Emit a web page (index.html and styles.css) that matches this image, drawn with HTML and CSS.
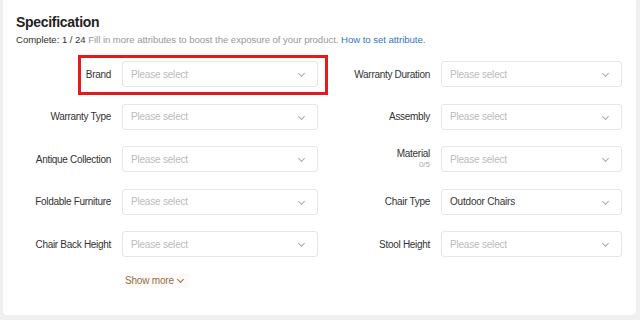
FILE: index.html
```html
<!DOCTYPE html>
<html lang="en">
<head>
    <meta charset="UTF-8">
    <meta name="viewport" content="width=device-width, initial-scale=1.0">
    <title>Specification</title>
    <link rel="stylesheet" href="styles.css">
</head>
<body>
    <div class="card">
        <h2 class="title">Specification</h2>
        <p class="subtitle">
            <span class="done">Complete: 1 / 24</span>
            Fill in more attributes to boost the exposure of your product.
            <a href="#" class="link">How to set attribute.</a>
        </p>

        <div class="spec-grid">
            <!-- highlight around the Brand field -->
            <div class="highlight"></div>

            <label class="label">Brand</label>
            <div class="select placeholder">Please select<span class="arrow"></span></div>
            <label class="label">Warranty Duration</label>
            <div class="select placeholder">Please select<span class="arrow"></span></div>

            <label class="label">Warranty Type</label>
            <div class="select placeholder">Please select<span class="arrow"></span></div>
            <label class="label">Assembly</label>
            <div class="select placeholder">Please select<span class="arrow"></span></div>

            <label class="label">Antique Collection</label>
            <div class="select placeholder">Please select<span class="arrow"></span></div>
            <label class="label">Material<span class="count">0/5</span></label>
            <div class="select placeholder">Please select<span class="arrow"></span></div>

            <label class="label">Foldable Furniture</label>
            <div class="select placeholder">Please select<span class="arrow"></span></div>
            <label class="label">Chair Type</label>
            <div class="select">Outdoor Chairs<span class="arrow"></span></div>

            <label class="label">Chair Back Height</label>
            <div class="select placeholder">Please select<span class="arrow"></span></div>
            <label class="label">Stool Height</label>
            <div class="select placeholder">Please select<span class="arrow"></span></div>
        </div>

        <div class="more-row">
            <a href="#" class="show-more">Show more <span class="more-arrow"></span></a>
        </div>
    </div>
</body>
</html>
```
FILE: styles.css
```css
body {
    font-family: 'Liberation Sans', Arial, sans-serif;
    margin: 0;
    padding: 0;
    background-color: #f0f0f0;
    color: #333;
}
.card {
    background-color: white;
    margin: 0 4px 0 3px;
    padding: 13px 14px 0 13px;
    height: 302px;
    border-radius: 0 0 4px 4px;
    box-shadow: 0 1px 2px rgba(0, 0, 0, 0.04);
}
.title {
    margin: 0;
    font-size: 14px;
    letter-spacing: -0.3px;
    font-weight: bold;
    color: #222;
    line-height: 18px;
}
.subtitle {
    margin: 2px 0 0 0;
    font-size: 9.6px;
    letter-spacing: -0.05px;
    line-height: 14px;
    color: #999;
}
.subtitle .done {
    color: #333;
}
.link {
    color: #2f78c4;
    text-decoration: none;
}
.spec-grid {
    position: relative;
    display: grid;
    grid-template-columns: 106px 196px 123px 181px;
    grid-auto-rows: 26px;
    row-gap: 16.5px;
    margin-top: 14px;
    margin-left: -13px;
    padding-left: 13px;
}
.label {
    display: flex;
    flex-direction: column;
    align-items: flex-end;
    justify-content: center;
    padding-right: 11px;
    font-size: 10px;
    letter-spacing: -0.3px;
    color: #333;
    text-align: right;
}
.count {
    margin-top: 1px;
    font-size: 8px;
    letter-spacing: 0;
    color: #aaa;
    line-height: 10px;
}
.select {
    position: relative;
    display: flex;
    align-items: center;
    padding-left: 8px;
    border: 1px solid #e6e6e6;
    border-radius: 3px;
    font-size: 10px;
    letter-spacing: -0.2px;
    color: #333;
}
.select.placeholder {
    color: #bbb;
}
.arrow {
    position: absolute;
    right: 13px;
    top: 9px;
    width: 4px;
    height: 4px;
    border-right: 1px solid #aaa;
    border-bottom: 1px solid #aaa;
    transform: rotate(45deg);
}
.highlight {
    position: absolute;
    left: 75px;
    top: -6px;
    width: 244px;
    height: 34px;
    border: 3px solid #e8191b;
    pointer-events: none;
}
.more-row {
    padding-left: 109px;
    margin-top: 13px;
}
.show-more {
    display: inline-block;
    padding: 2px 6px 2px 0;
    font-size: 10px;
    letter-spacing: -0.2px;
    color: #8c7240;
    text-decoration: none;
    background-color: #fffafa;
}
.more-arrow {
    display: inline-block;
    width: 4px;
    height: 4px;
    margin-left: 2px;
    margin-bottom: 2px;
    border-right: 1.5px solid #8c7240;
    border-bottom: 1.5px solid #8c7240;
    transform: rotate(45deg);
}
```
